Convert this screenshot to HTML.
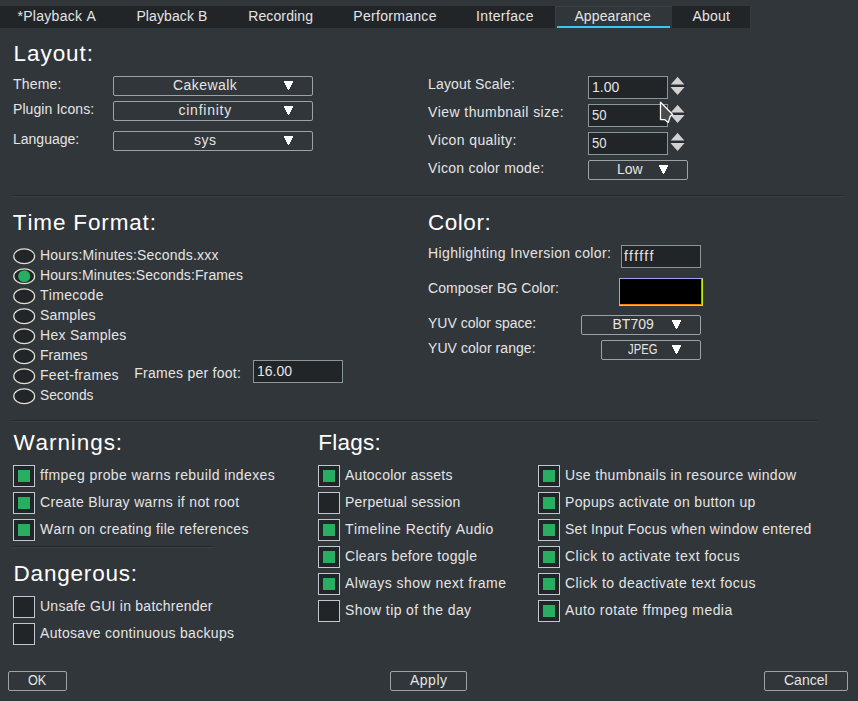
<!DOCTYPE html>
<html><head><meta charset="utf-8"><style>
html,body{margin:0;padding:0;}
body{width:858px;height:701px;overflow:hidden;position:relative;background:#31363a;font-family:"Liberation Sans",sans-serif;}
.t{position:absolute;line-height:0;white-space:pre;color:#e4e4e4;transform-origin:0 0;font-kerning:none;font-variant-ligatures:none;}
</style></head><body>
<div style='position:absolute;left:0px;top:6px;width:750px;height:22px;background:#222528;box-shadow:1px 0 0 #363a3e'></div>
<div style='position:absolute;left:555px;top:6px;width:117px;height:22px;background:#31363a;box-shadow:inset 1px 1px 0 #3b3f44'></div>
<div style='position:absolute;left:557px;top:26px;width:113px;height:2px;background:#3fc3f2'></div>
<div style='position:absolute;left:113px;top:76px;width:200px;height:20px;box-sizing:border-box;border:1px solid #9ea2a7;border-radius:2px'></div>
<svg style='position:absolute;left:284.0px;top:81px' width='9' height='9' shape-rendering='crispEdges'><path d='M0.0,0h9v1h-9zM0.0,1h9v1h-9zM1.0,2h7v1h-7zM1.0,3h7v1h-7zM2.0,4h5v1h-5zM2.0,5h5v1h-5zM3.0,6h3v1h-3zM3.0,7h3v1h-3zM4.0,8h1v1h-1z' fill='#ffffff'/></svg>
<div style='position:absolute;left:113px;top:101px;width:200px;height:20px;box-sizing:border-box;border:1px solid #9ea2a7;border-radius:2px'></div>
<svg style='position:absolute;left:284.0px;top:106px' width='9' height='9' shape-rendering='crispEdges'><path d='M0.0,0h9v1h-9zM0.0,1h9v1h-9zM1.0,2h7v1h-7zM1.0,3h7v1h-7zM2.0,4h5v1h-5zM2.0,5h5v1h-5zM3.0,6h3v1h-3zM3.0,7h3v1h-3zM4.0,8h1v1h-1z' fill='#ffffff'/></svg>
<div style='position:absolute;left:113px;top:131px;width:200px;height:20px;box-sizing:border-box;border:1px solid #9ea2a7;border-radius:2px'></div>
<svg style='position:absolute;left:284.0px;top:136px' width='9' height='9' shape-rendering='crispEdges'><path d='M0.0,0h9v1h-9zM0.0,1h9v1h-9zM1.0,2h7v1h-7zM1.0,3h7v1h-7zM2.0,4h5v1h-5zM2.0,5h5v1h-5zM3.0,6h3v1h-3zM3.0,7h3v1h-3zM4.0,8h1v1h-1z' fill='#ffffff'/></svg>
<div style='position:absolute;left:588px;top:76px;width:80px;height:23px;box-sizing:border-box;border:1px solid #8b9696;background:#222528'></div>
<svg style='position:absolute;left:669px;top:77px' width='18' height='20'><polygon points='1.5,7.7 15.6,7.7 8.55,-0.1' fill='#d2d2d2'/><rect x='0' y='7.7' width='17' height='2.3' fill='#2a2d31'/><polygon points='1.5,10 15.6,10 8.55,17.9' fill='#d2d2d2'/></svg>
<div style='position:absolute;left:588px;top:104px;width:80px;height:23px;box-sizing:border-box;border:1px solid #8b9696;background:#222528'></div>
<svg style='position:absolute;left:669px;top:105px' width='18' height='20'><polygon points='1.5,7.7 15.6,7.7 8.55,-0.1' fill='#d2d2d2'/><rect x='0' y='7.7' width='17' height='2.3' fill='#2a2d31'/><polygon points='1.5,10 15.6,10 8.55,17.9' fill='#d2d2d2'/></svg>
<div style='position:absolute;left:588px;top:132px;width:80px;height:23px;box-sizing:border-box;border:1px solid #8b9696;background:#222528'></div>
<svg style='position:absolute;left:669px;top:133px' width='18' height='20'><polygon points='1.5,7.7 15.6,7.7 8.55,-0.1' fill='#d2d2d2'/><rect x='0' y='7.7' width='17' height='2.3' fill='#2a2d31'/><polygon points='1.5,10 15.6,10 8.55,17.9' fill='#d2d2d2'/></svg>
<div style='position:absolute;left:588px;top:160px;width:100px;height:20px;box-sizing:border-box;border:1px solid #9ea2a7;border-radius:2px'></div>
<svg style='position:absolute;left:659.0px;top:165px' width='9' height='9' shape-rendering='crispEdges'><path d='M0.0,0h9v1h-9zM0.0,1h9v1h-9zM1.0,2h7v1h-7zM1.0,3h7v1h-7zM2.0,4h5v1h-5zM2.0,5h5v1h-5zM3.0,6h3v1h-3zM3.0,7h3v1h-3zM4.0,8h1v1h-1z' fill='#ffffff'/></svg>
<div style='position:absolute;left:13px;top:195px;width:830px;height:1px;background:#26292b'></div>
<div style='position:absolute;left:13px;top:196px;width:830px;height:1px;background:#3c3f48'></div>
<svg style='position:absolute;left:13px;top:248px' width='23' height='17'><ellipse cx='11.2' cy='8.2' rx='10.4' ry='7.4' fill='#222528' stroke='#e2dfd3' stroke-width='1.25'/></svg>
<svg style='position:absolute;left:13px;top:268px' width='23' height='17'><ellipse cx='11.2' cy='8.2' rx='10.4' ry='7.4' fill='#222528' stroke='#e2dfd3' stroke-width='1.25'/><circle cx='11.2' cy='8.2' r='6' fill='#27ae60'/></svg>
<svg style='position:absolute;left:13px;top:288px' width='23' height='17'><ellipse cx='11.2' cy='8.2' rx='10.4' ry='7.4' fill='#222528' stroke='#e2dfd3' stroke-width='1.25'/></svg>
<svg style='position:absolute;left:13px;top:308px' width='23' height='17'><ellipse cx='11.2' cy='8.2' rx='10.4' ry='7.4' fill='#222528' stroke='#e2dfd3' stroke-width='1.25'/></svg>
<svg style='position:absolute;left:13px;top:328px' width='23' height='17'><ellipse cx='11.2' cy='8.2' rx='10.4' ry='7.4' fill='#222528' stroke='#e2dfd3' stroke-width='1.25'/></svg>
<svg style='position:absolute;left:13px;top:348px' width='23' height='17'><ellipse cx='11.2' cy='8.2' rx='10.4' ry='7.4' fill='#222528' stroke='#e2dfd3' stroke-width='1.25'/></svg>
<svg style='position:absolute;left:13px;top:368px' width='23' height='17'><ellipse cx='11.2' cy='8.2' rx='10.4' ry='7.4' fill='#222528' stroke='#e2dfd3' stroke-width='1.25'/></svg>
<svg style='position:absolute;left:13px;top:388px' width='23' height='17'><ellipse cx='11.2' cy='8.2' rx='10.4' ry='7.4' fill='#222528' stroke='#e2dfd3' stroke-width='1.25'/></svg>
<div style='position:absolute;left:253px;top:360px;width:90px;height:23px;box-sizing:border-box;border:1px solid #8b9696;background:#222528'></div>
<div style='position:absolute;left:621px;top:245px;width:80px;height:23px;box-sizing:border-box;border:1px solid #8b9696;background:#222528'></div>
<div style='position:absolute;left:619px;top:278px;width:84px;height:28px;box-sizing:border-box;background:#000;border-top:1px solid #a6a0f2;border-left:1px solid #a6a0f2;box-shadow:inset -1px -1px 0 #ff7d00;border-right:1px solid #b8f000;border-bottom:1px solid #b8f000'></div>
<div style='position:absolute;left:581px;top:315px;width:120px;height:20px;box-sizing:border-box;border:1px solid #9ea2a7;border-radius:2px'></div>
<svg style='position:absolute;left:672.0px;top:320px' width='9' height='9' shape-rendering='crispEdges'><path d='M0.0,0h9v1h-9zM0.0,1h9v1h-9zM1.0,2h7v1h-7zM1.0,3h7v1h-7zM2.0,4h5v1h-5zM2.0,5h5v1h-5zM3.0,6h3v1h-3zM3.0,7h3v1h-3zM4.0,8h1v1h-1z' fill='#ffffff'/></svg>
<div style='position:absolute;left:601px;top:340px;width:100px;height:20px;box-sizing:border-box;border:1px solid #9ea2a7;border-radius:2px'></div>
<svg style='position:absolute;left:672.0px;top:345px' width='9' height='9' shape-rendering='crispEdges'><path d='M0.0,0h9v1h-9zM0.0,1h9v1h-9zM1.0,2h7v1h-7zM1.0,3h7v1h-7zM2.0,4h5v1h-5zM2.0,5h5v1h-5zM3.0,6h3v1h-3zM3.0,7h3v1h-3zM4.0,8h1v1h-1z' fill='#ffffff'/></svg>
<div style='position:absolute;left:13px;top:420px;width:805px;height:1px;background:#26292b'></div>
<div style='position:absolute;left:13px;top:421px;width:805px;height:1px;background:#3c3f48'></div>
<div style='position:absolute;left:13px;top:465px;width:22px;height:22px;box-sizing:border-box;border:1px solid #c3c7cf;background:#222528'></div>
<div style='position:absolute;left:18px;top:470px;width:12px;height:12px;background:#27ae60'></div>
<div style='position:absolute;left:13px;top:492px;width:22px;height:22px;box-sizing:border-box;border:1px solid #c3c7cf;background:#222528'></div>
<div style='position:absolute;left:18px;top:497px;width:12px;height:12px;background:#27ae60'></div>
<div style='position:absolute;left:13px;top:519px;width:22px;height:22px;box-sizing:border-box;border:1px solid #c3c7cf;background:#222528'></div>
<div style='position:absolute;left:18px;top:524px;width:12px;height:12px;background:#27ae60'></div>
<div style='position:absolute;left:13px;top:546px;width:201px;height:1px;background:#26292b'></div>
<div style='position:absolute;left:13px;top:547px;width:201px;height:1px;background:#3c3f48'></div>
<div style='position:absolute;left:13px;top:596px;width:22px;height:22px;box-sizing:border-box;border:1px solid #c3c7cf;background:#222528'></div>
<div style='position:absolute;left:13px;top:623px;width:22px;height:22px;box-sizing:border-box;border:1px solid #c3c7cf;background:#222528'></div>
<div style='position:absolute;left:318px;top:465px;width:22px;height:22px;box-sizing:border-box;border:1px solid #c3c7cf;background:#222528'></div>
<div style='position:absolute;left:323px;top:470px;width:12px;height:12px;background:#27ae60'></div>
<div style='position:absolute;left:318px;top:492px;width:22px;height:22px;box-sizing:border-box;border:1px solid #c3c7cf;background:#222528'></div>
<div style='position:absolute;left:318px;top:519px;width:22px;height:22px;box-sizing:border-box;border:1px solid #c3c7cf;background:#222528'></div>
<div style='position:absolute;left:323px;top:524px;width:12px;height:12px;background:#27ae60'></div>
<div style='position:absolute;left:318px;top:546px;width:22px;height:22px;box-sizing:border-box;border:1px solid #c3c7cf;background:#222528'></div>
<div style='position:absolute;left:323px;top:551px;width:12px;height:12px;background:#27ae60'></div>
<div style='position:absolute;left:318px;top:573px;width:22px;height:22px;box-sizing:border-box;border:1px solid #c3c7cf;background:#222528'></div>
<div style='position:absolute;left:323px;top:578px;width:12px;height:12px;background:#27ae60'></div>
<div style='position:absolute;left:318px;top:600px;width:22px;height:22px;box-sizing:border-box;border:1px solid #c3c7cf;background:#222528'></div>
<div style='position:absolute;left:538px;top:465px;width:22px;height:22px;box-sizing:border-box;border:1px solid #c3c7cf;background:#222528'></div>
<div style='position:absolute;left:543px;top:470px;width:12px;height:12px;background:#27ae60'></div>
<div style='position:absolute;left:538px;top:492px;width:22px;height:22px;box-sizing:border-box;border:1px solid #c3c7cf;background:#222528'></div>
<div style='position:absolute;left:543px;top:497px;width:12px;height:12px;background:#27ae60'></div>
<div style='position:absolute;left:538px;top:519px;width:22px;height:22px;box-sizing:border-box;border:1px solid #c3c7cf;background:#222528'></div>
<div style='position:absolute;left:543px;top:524px;width:12px;height:12px;background:#27ae60'></div>
<div style='position:absolute;left:538px;top:546px;width:22px;height:22px;box-sizing:border-box;border:1px solid #c3c7cf;background:#222528'></div>
<div style='position:absolute;left:543px;top:551px;width:12px;height:12px;background:#27ae60'></div>
<div style='position:absolute;left:538px;top:573px;width:22px;height:22px;box-sizing:border-box;border:1px solid #c3c7cf;background:#222528'></div>
<div style='position:absolute;left:543px;top:578px;width:12px;height:12px;background:#27ae60'></div>
<div style='position:absolute;left:538px;top:600px;width:22px;height:22px;box-sizing:border-box;border:1px solid #c3c7cf;background:#222528'></div>
<div style='position:absolute;left:543px;top:605px;width:12px;height:12px;background:#27ae60'></div>
<div style='position:absolute;left:8px;top:671px;width:59px;height:20px;box-sizing:border-box;border:1px solid #9ea2a7;border-radius:2px'></div>
<div style='position:absolute;left:390px;top:671px;width:77px;height:20px;box-sizing:border-box;border:1px solid #9ea2a7;border-radius:2px'></div>
<div style='position:absolute;left:764px;top:671px;width:84px;height:20px;box-sizing:border-box;border:1px solid #9ea2a7;border-radius:2px'></div>
<svg style='position:absolute;left:0;top:0' width='858' height='701'><polygon points='660.5,102.3 660.5,119.6 664.6,119.6 668.3,122.4 670.2,116.3 672.6,114.5' fill='#4b4b4b' stroke='#ffffff' stroke-width='1.3' stroke-linejoin='round'/></svg>
<div class='t' style='left:17.40px;top:16px;font-size:14.0px;letter-spacing:0.300px;'>*Playback A</div>
<div class='t' style='left:136.40px;top:16px;font-size:14.0px;letter-spacing:0.111px;'>Playback B</div>
<div class='t' style='left:248.20px;top:16px;font-size:14.0px;letter-spacing:0.125px;'>Recording</div>
<div class='t' style='left:353.30px;top:16px;font-size:14.0px;letter-spacing:0.300px;'>Performance</div>
<div class='t' style='left:476.00px;top:16px;font-size:14.0px;letter-spacing:0.375px;'>Interface</div>
<div class='t' style='left:574.40px;top:16px;font-size:14.0px;letter-spacing:0.111px;'>Appearance</div>
<div class='t' style='left:692.40px;top:16px;font-size:14.0px;letter-spacing:0.250px;'>About</div>
<div class='t' style='left:13.60px;top:54px;font-size:22.5px;letter-spacing:0.933px;color:#ffffff;'>Layout:</div>
<div class='t' style='left:12.85px;top:223px;font-size:22.5px;letter-spacing:0.850px;color:#ffffff;'>Time Format:</div>
<div class='t' style='left:427.90px;top:223px;font-size:22.5px;letter-spacing:0.560px;color:#ffffff;'>Color:</div>
<div class='t' style='left:13.40px;top:443px;font-size:22.5px;letter-spacing:0.925px;color:#ffffff;'>Warnings:</div>
<div class='t' style='left:318.20px;top:443px;font-size:22.5px;letter-spacing:0.280px;color:#ffffff;'>Flags:</div>
<div class='t' style='left:13.50px;top:574px;font-size:22.5px;letter-spacing:0.811px;color:#ffffff;'>Dangerous:</div>
<div class='t' style='left:13.00px;top:84px;font-size:14.0px;letter-spacing:0.200px;'>Theme:</div>
<div class='t' style='left:173.00px;top:85px;font-size:14.0px;letter-spacing:0.429px;'>Cakewalk</div>
<div class='t' style='left:13.00px;top:109px;font-size:14.0px;letter-spacing:0.083px;'>Plugin Icons:</div>
<div class='t' style='left:178.50px;top:110px;font-size:14.0px;letter-spacing:0.750px;'>cinfinity</div>
<div class='t' style='left:13.00px;top:139px;font-size:14.0px;letter-spacing:0.000px;'>Language:</div>
<div class='t' style='left:194.00px;top:140px;font-size:14.0px;letter-spacing:0.500px;'>sys</div>
<div class='t' style='left:428.00px;top:84px;font-size:14.0px;letter-spacing:0.167px;'>Layout Scale:</div>
<div class='t' style='left:592.00px;top:87px;font-size:14.0px;letter-spacing:0.000px;'>1.00</div>
<div class='t' style='left:428.00px;top:112px;font-size:14.0px;letter-spacing:0.421px;'>View thumbnail size:</div>
<div class='t' style='left:592.00px;top:115px;font-size:14.0px;letter-spacing:0.000px;transform:scaleX(0.9375);'>50</div>
<div class='t' style='left:428.00px;top:140px;font-size:14.0px;letter-spacing:0.385px;'>Vicon quality:</div>
<div class='t' style='left:592.00px;top:143px;font-size:14.0px;letter-spacing:0.000px;transform:scaleX(0.9375);'>50</div>
<div class='t' style='left:428.00px;top:168px;font-size:14.0px;letter-spacing:0.250px;'>Vicon color mode:</div>
<div class='t' style='left:617.00px;top:169px;font-size:14.0px;letter-spacing:0.000px;'>Low</div>
<div class='t' style='left:40.00px;top:255px;font-size:14.0px;letter-spacing:0.208px;'>Hours:Minutes:Seconds.xxx</div>
<div class='t' style='left:40.00px;top:275px;font-size:14.0px;letter-spacing:0.111px;'>Hours:Minutes:Seconds:Frames</div>
<div class='t' style='left:40.00px;top:295px;font-size:14.0px;letter-spacing:0.286px;'>Timecode</div>
<div class='t' style='left:40.00px;top:315px;font-size:14.0px;letter-spacing:0.167px;'>Samples</div>
<div class='t' style='left:40.00px;top:335px;font-size:14.0px;letter-spacing:0.300px;'>Hex Samples</div>
<div class='t' style='left:40.00px;top:355px;font-size:14.0px;letter-spacing:0.000px;'>Frames</div>
<div class='t' style='left:40.00px;top:375px;font-size:14.0px;letter-spacing:0.300px;'>Feet-frames</div>
<div class='t' style='left:40.00px;top:395px;font-size:14.0px;letter-spacing:0.000px;transform:scaleX(0.9818);'>Seconds</div>
<div class='t' style='left:134.20px;top:373px;font-size:14.0px;letter-spacing:0.267px;'>Frames per foot:</div>
<div class='t' style='left:257.00px;top:371px;font-size:14.0px;letter-spacing:0.000px;'>16.00</div>
<div class='t' style='left:428.00px;top:253px;font-size:14.0px;letter-spacing:0.393px;'>Highlighting Inversion color:</div>
<div class='t' style='left:624.00px;top:256px;font-size:14.0px;letter-spacing:1.200px;'>ffffff</div>
<div class='t' style='left:428.00px;top:288px;font-size:14.0px;letter-spacing:0.059px;'>Composer BG Color:</div>
<div class='t' style='left:428.00px;top:323px;font-size:14.0px;letter-spacing:0.000px;'>YUV color space:</div>
<div class='t' style='left:612.50px;top:324px;font-size:14.0px;letter-spacing:0.000px;'>BT709</div>
<div class='t' style='left:428.00px;top:348px;font-size:14.0px;letter-spacing:0.067px;'>YUV color range:</div>
<div class='t' style='left:628.00px;top:349px;font-size:14.0px;letter-spacing:0.000px;transform:scaleX(0.8056);'>JPEG</div>
<div class='t' style='left:40.00px;top:475px;font-size:14.0px;letter-spacing:0.394px;'>ffmpeg probe warns rebuild indexes</div>
<div class='t' style='left:40.00px;top:502px;font-size:14.0px;letter-spacing:0.333px;'>Create Bluray warns if not root</div>
<div class='t' style='left:40.00px;top:529px;font-size:14.0px;letter-spacing:0.323px;'>Warn on creating file references</div>
<div class='t' style='left:40.00px;top:606px;font-size:14.0px;letter-spacing:0.250px;'>Unsafe GUI in batchrender</div>
<div class='t' style='left:40.00px;top:633px;font-size:14.0px;letter-spacing:0.308px;'>Autosave continuous backups</div>
<div class='t' style='left:345.00px;top:475px;font-size:14.0px;letter-spacing:0.267px;'>Autocolor assets</div>
<div class='t' style='left:345.00px;top:502px;font-size:14.0px;letter-spacing:0.250px;'>Perpetual session</div>
<div class='t' style='left:345.00px;top:529px;font-size:14.0px;letter-spacing:0.429px;'>Timeline Rectify Audio</div>
<div class='t' style='left:345.00px;top:556px;font-size:14.0px;letter-spacing:0.316px;'>Clears before toggle</div>
<div class='t' style='left:345.00px;top:583px;font-size:14.0px;letter-spacing:0.476px;'>Always show next frame</div>
<div class='t' style='left:345.00px;top:610px;font-size:14.0px;letter-spacing:0.389px;'>Show tip of the day</div>
<div class='t' style='left:565.00px;top:475px;font-size:14.0px;letter-spacing:0.344px;'>Use thumbnails in resource window</div>
<div class='t' style='left:565.00px;top:502px;font-size:14.0px;letter-spacing:0.333px;'>Popups activate on button up</div>
<div class='t' style='left:565.00px;top:529px;font-size:14.0px;letter-spacing:0.265px;'>Set Input Focus when window entered</div>
<div class='t' style='left:565.00px;top:556px;font-size:14.0px;letter-spacing:0.481px;'>Click to activate text focus</div>
<div class='t' style='left:565.00px;top:583px;font-size:14.0px;letter-spacing:0.448px;'>Click to deactivate text focus</div>
<div class='t' style='left:565.00px;top:610px;font-size:14.0px;letter-spacing:0.435px;'>Auto rotate ffmpeg media</div>
<div class='t' style='left:28.00px;top:680px;font-size:14.0px;letter-spacing:0.000px;transform:scaleX(0.9048);'>OK</div>
<div class='t' style='left:410.00px;top:680px;font-size:14.0px;letter-spacing:0.500px;'>Apply</div>
<div class='t' style='left:784.00px;top:680px;font-size:14.0px;letter-spacing:0.000px;'>Cancel</div>
</body></html>
